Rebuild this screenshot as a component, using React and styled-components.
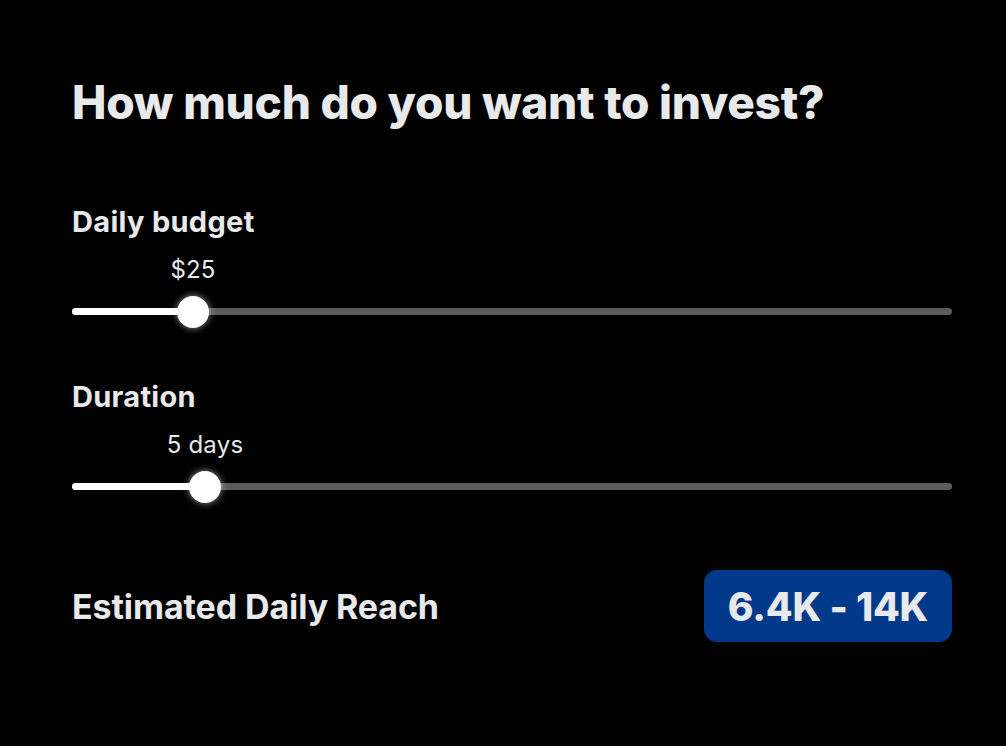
import React from 'react'
import styled, { createGlobalStyle } from 'styled-components'

const GlobalStyle = createGlobalStyle`
  html, body {
    margin: 0;
    padding: 0;
    background: #000;
  }
  body {
    font-family: Inter, "Noto Sans", "Liberation Sans", sans-serif;
    color: #e7e9ea;
  }
`;

const Page = styled.div`
  width: 880px;
  padding: 74px 54px 0 72px;
`;

const Title = styled.h1`
  margin: 0;
  font-size: 46px;
  line-height: 56px;
  font-weight: 800;
  letter-spacing: -0.25px;
  color: #e7e9ea;
`;

const Section = styled.section`
  margin-top: ${({ $top }) => $top}px;
`;

const Label = styled.div`
  font-size: 29px;
  line-height: 36px;
  font-weight: 700;
  letter-spacing: 0.3px;
  color: #e7e9ea;
`;

const SliderBox = styled.div`
  position: relative;
  height: 87px;
`;

const Value = styled.span`
  position: absolute;
  top: 15px;
  transform: translateX(-50%);
  font-size: 24px;
  line-height: 30px;
  letter-spacing: 0.2px;
  color: #e7e9ea;
  white-space: nowrap;
`;

const Track = styled.div`
  position: absolute;
  left: 0;
  right: 0;
  top: 68px;
  height: 7px;
  border-radius: 4px;
  background: #5b5b5b;
`;

const Fill = styled.div`
  height: 100%;
  border-radius: 4px;
  background: #fff;
`;

const Thumb = styled.div`
  position: absolute;
  top: 56px;
  width: 32px;
  height: 32px;
  margin-left: -16px;
  border-radius: 50%;
  background: #fff;
  box-shadow: 0 0 6px 1px rgba(255, 255, 255, 0.45);
`;

const ReachRow = styled.div`
  display: flex;
  align-items: center;
  justify-content: space-between;
  margin-top: 68px;
`;

const ReachLabel = styled.div`
  font-size: 34px;
  font-weight: 700;
  letter-spacing: -0.1px;
  color: #e7e9ea;
`;

const Badge = styled.div`
  display: flex;
  align-items: center;
  justify-content: center;
  width: 248px;
  height: 72px;
  border-radius: 13px;
  background: #03398a;
  font-size: 39px;
  font-weight: 800;
  color: #e7e9ea;
  letter-spacing: -0.2px;
`;

const Slider = ({ value, at }) => (
  <SliderBox>
    <Value style={{ left: at }}>{value}</Value>
    <Track>
      <Fill style={{ width: at }} />
    </Track>
    <Thumb style={{ left: at }} />
  </SliderBox>
);

export default function App() {
  return (
    <>
      <GlobalStyle />
      <Page>
        <Title>How much do you want to invest?</Title>
        <Section $top={74}>
          <Label>Daily budget</Label>
          <Slider value="$25" at={121} />
        </Section>
        <Section $top={52}>
          <Label>Duration</Label>
          <Slider value="5 days" at={133} />
        </Section>
        <ReachRow>
          <ReachLabel>Estimated Daily Reach</ReachLabel>
          <Badge>6.4K - 14K</Badge>
        </ReachRow>
      </Page>
    </>
  );
}
